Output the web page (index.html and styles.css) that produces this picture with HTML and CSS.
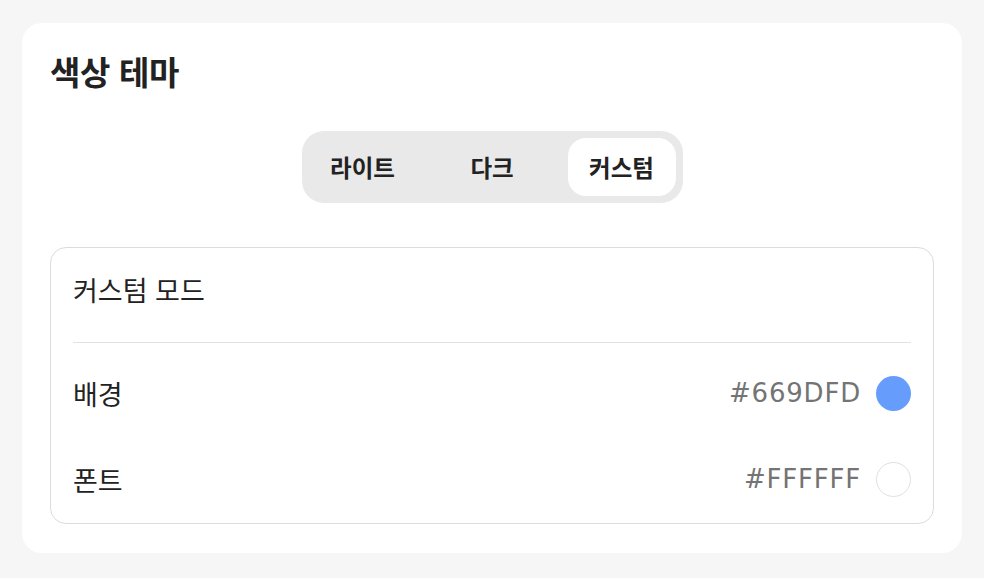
FILE: index.html
```html
<!DOCTYPE html>
<html lang="ko">
<head>
<meta charset="utf-8">
<title>색상 테마</title>
<link rel="stylesheet" href="styles.css">
</head>
<body>
<section class="card">
  <h1 class="title">색상 테마</h1>
  <div class="segment-wrap">
    <div class="segment">
      <button class="seg-item">라이트</button>
      <button class="seg-item">다크</button>
      <button class="seg-item active">커스텀</button>
    </div>
  </div>
  <div class="panel">
    <div class="panel-head">커스텀 모드</div>
    <div class="divider"></div>
    <div class="rows">
      <div class="row">
        <span class="row-label">배경</span>
        <span class="row-value">
          <span class="hex">#669DFD</span>
          <span class="swatch swatch-blue"></span>
        </span>
      </div>
      <div class="row">
        <span class="row-label">폰트</span>
        <span class="row-value">
          <span class="hex">#FFFFFF</span>
          <span class="swatch swatch-white"></span>
        </span>
      </div>
    </div>
  </div>
</section>
</body>
</html>
```
FILE: styles.css
```css
html, body {
  margin: 0;
  padding: 0;
}
body {
  background: #f6f6f6;
  padding: 23px 22px 25px;
  font-family: "Noto Sans CJK KR", "Noto Sans", sans-serif;
  color: #222;
}
.card {
  background: #fff;
  border-radius: 20px;
  padding: 28px 28px 29px;
  height: 473px;
}
.title {
  margin: 0;
  font-size: 33px;
  line-height: 40px;
  font-weight: 700;
  color: #222;
  letter-spacing: -0.3px;
}
.segment-wrap {
  display: flex;
  justify-content: center;
  margin-top: 40px;
}
.segment {
  display: flex;
  gap: 21.5px;
  padding: 7px;
  background: #e9e9e9;
  border-radius: 22px;
}
.seg-item {
  width: 108px;
  height: 58px;
  border: 0;
  background: transparent;
  border-radius: 18px;
  font-family: "Noto Sans CJK KR", sans-serif;
  font-size: 23.5px;
  font-weight: 700;
  color: #222;
  padding: 0;
}
.seg-item.active {
  background: #fff;
}
.panel {
  margin-top: 44px;
  border: 1px solid #dcdcdc;
  border-radius: 16px;
  padding: 0 22px;
  height: 275px;
}
.panel-head {
  padding: 27px 0 37px;
  font-size: 27px;
  line-height: 30px;
  color: #222;
}
.divider {
  height: 1px;
  background: #e2e2e2;
}
.rows {
  padding-top: 7px;
}
.row {
  height: 86px;
  display: flex;
  align-items: center;
  justify-content: space-between;
}
.row-label {
  font-size: 27px;
  color: #222;
}
.row-value {
  display: flex;
  align-items: center;
  gap: 16px;
}
.hex {
  font-family: "DejaVu Sans", sans-serif;
  font-size: 26px;
  letter-spacing: 0.8px;
  color: #747474;
  margin-right: -1px;
}
.swatch {
  width: 35px;
  height: 35px;
  border-radius: 50%;
  box-sizing: border-box;
}
.swatch-blue {
  background: #669dfd;
}
.swatch-white {
  background: #fff;
  border: 1px solid #e0e0e0;
}
```
